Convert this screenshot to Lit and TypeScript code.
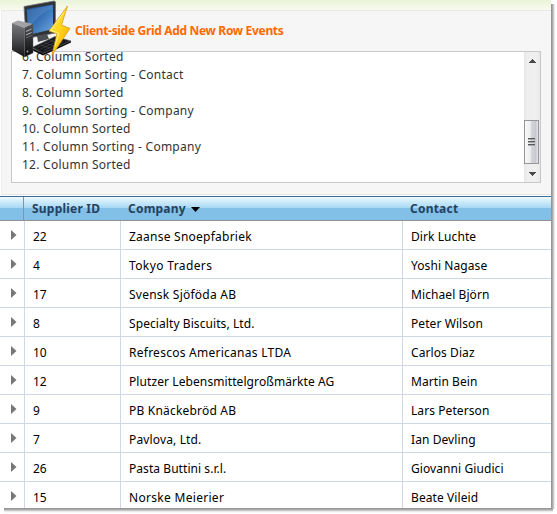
import { LitElement, html, css } from "lit";
import { customElement } from "lit/decorators.js";

const log = [
  "6. Column Sorted",
  "7. Column Sorting - Contact",
  "8. Column Sorted",
  "9. Column Sorting - Company",
  "10. Column Sorted",
  "11. Column Sorting - Company",
  "12. Column Sorted",
];

interface Supplier {
  id: number;
  company: string;
  contact: string;
  /** Letter spacing of the company name, in px. */
  tracking: number;
}

const suppliers: Supplier[] = [
  { id: 22, company: "Zaanse Snoepfabriek", contact: "Dirk Luchte", tracking: 0.24 },
  { id: 4, company: "Tokyo Traders", contact: "Yoshi Nagase", tracking: 0.38 },
  { id: 17, company: "Svensk Sjöföda AB", contact: "Michael Björn", tracking: 0.24 },
  { id: 8, company: "Specialty Biscuits, Ltd.", contact: "Peter Wilson", tracking: 0.08 },
  { id: 10, company: "Refrescos Americanas LTDA", contact: "Carlos Diaz", tracking: 0.26 },
  { id: 12, company: "Plutzer Lebensmittelgroßmärkte AG", contact: "Martin Bein", tracking: 0.09 },
  { id: 9, company: "PB Knäckebröd AB", contact: "Lars Peterson", tracking: 0.2 },
  { id: 7, company: "Pavlova, Ltd.", contact: "Ian Devling", tracking: 0.14 },
  { id: 26, company: "Pasta Buttini s.r.l.", contact: "Giovanni Giudici", tracking: 0.06 },
  { id: 15, company: "Norske Meierier", contact: "Beate Vileid", tracking: 0.3 },
];

@customElement("event-log")
class EventLog extends LitElement {
  static styles = css`
    :host { display: block; position: relative; box-sizing: border-box; height: 185px; margin-left: 1px; padding: 0 10px 0 10px;
      background: #f6f6f6; border-top: 1px solid #e8e8e8; border-left: 1px solid #ededed; border-bottom: 1px solid #e6e6e6; }
    .title { height: 40px; padding-left: 63px; line-height: 40px; font-weight: 700; font-size: 12px; color: #ff6a00; letter-spacing: -0.32px; white-space: nowrap; }
    .icon { position: absolute; left: 10px; top: -11px; width: 60px; height: 58px; z-index: 2; }
    .box { box-sizing: border-box; margin-left: -1px; width: 530px; height: 132px; border: 1px solid #c8c8c8; background: #fff; display: flex; overflow: hidden; }
    .lines { flex: 1; margin-top: -4px; padding-left: 10px; font-size: 12px; line-height: 18px; letter-spacing: 0.25px; color: #333; }
    .line { height: 18px; white-space: pre; }
    .bar { width: 16px; height: 130px; background: linear-gradient(90deg, #e5e5e5, #eee 3px, #f0f0f0 12px, #e8e8e8); }
    .bar svg { display: block; }
  `;
  render() {
    return html`
      <svg class="icon" viewBox="0 0 60 58">
        <defs>
          <linearGradient id="scr" x1="0" y1="0" x2="1" y2="1">
            <stop offset="0" stop-color="#1c4f94" /><stop offset=".5" stop-color="#3873b8" /><stop offset="1" stop-color="#73a9df" />
          </linearGradient>
          <linearGradient id="twr" x1="0" y1="0" x2="0" y2="1">
            <stop offset="0" stop-color="#77797c" /><stop offset=".5" stop-color="#4a4b4e" /><stop offset="1" stop-color="#151517" />
          </linearGradient>
          <linearGradient id="front" x1="0" y1="0" x2="0" y2="1">
            <stop offset="0" stop-color="#55575a" /><stop offset=".5" stop-color="#2d2e30" /><stop offset="1" stop-color="#0c0c0d" />
          </linearGradient>
          <linearGradient id="bolt" x1="0" y1="0" x2="1" y2="1">
            <stop offset="0" stop-color="#fff05a" /><stop offset=".5" stop-color="#ffd41c" /><stop offset="1" stop-color="#f3a005" />
          </linearGradient>
        </defs>
        <path d="M12 6.500 42 1q1.500 0 1.500 1.500V33L14 38.500Z" fill="#303235" stroke="#737578" stroke-width=".8" />
        <path d="M14.500 9 41 4.500V29L16.500 35Z" fill="url(#scr)" />
        <path d="M15 10 40 5.500v3Q24 15 16 30Z" fill="#8bbbe8" opacity=".2" />
        <path d="M25 36 35 34l2 5-11 3Z" fill="#4c4f52" />
        <path d="M20 47.500 43 36.500 59 41 31 53.500Z" fill="#222326" stroke="#56585b" stroke-width=".6" />
        <path d="M20 48v2l11 5.500 28-13v-1.500L31 53.500Z" fill="#0c0c0d" />
        <path d="m24 47 19-9 12 3-24 11Z" fill="#131416" />
        <path d="m25.500 47.500 20-9m-17 10.500 20-9m-17 10.500 20-9M29 45l9 3m-5-5 9 3m-4-5.500 9 3" stroke="#4d5056" stroke-width=".6" />
        <path d="m0 23 6-2.500 15 3.500-8.500 4Z" fill="#a0a2a5" />
        <path d="m0 23 12.500 5v29L0 50Z" fill="url(#twr)" />
        <path d="m12.500 28 8.500-4v29l-8.500 4Z" fill="url(#front)" stroke="#5a5c5f" stroke-width=".4" />
        <path d="m14 31.500 5.500-2.500m-5.500 6 5.500-2.500" stroke="#b3b5b8" stroke-width="1" />
        <path d="m14 38 5.500-2.500" stroke="#77797c" stroke-width=".7" />
        <circle cx="15.500" cy="51.500" r=".9" fill="#a3a5a8" />
        <path d="M55.500 6 37 31l8 2.500L40 55 58 28.500 49.500 25Z" fill="url(#bolt)" stroke="#dc9d14" stroke-width=".8" />
        <path d="M52.500 11.500 38.500 30.500l8 2.500-3.500 13" fill="none" stroke="#fff9a8" stroke-width=".8" />
      </svg>
      <div class="title"><span>Client-side Grid Add New Row Events</span></div>
      <div class="box">
        <div class="lines">${log.map((l) => html`<div class="line"><span>${l}</span></div>`)}</div>
        <div class="bar">
          <svg width="16" height="130" viewBox="0 0 16 130" shape-rendering="crispEdges">
            <defs>
              <linearGradient id="th"><stop offset="0" stop-color="#fafafa" /><stop offset=".42" stop-color="#ececee" /><stop offset=".5" stop-color="#d5d6dc" /><stop offset=".8" stop-color="#c8c9d0" /><stop offset="1" stop-color="#eee" /></linearGradient>
            </defs>
            <path d="M5 11h7v-1h-1v-1h-1v-1h-1v-1h-1v1h-1v1h-1v1h-1Z" fill="#4a4a4a" />
            <rect x=".5" y="68.500" width="14" height="43" rx="1" fill="url(#th)" stroke="#96969a" />
            <path d="M4 86.500h7M4 89.500h7M4 92.500h7" stroke="#55585d" />
            <path d="M4 87.500h7M4 90.500h7M4 93.500h7" stroke="#aaa" />
            <path d="M5 120h7v1h-1v1h-1v1h-1v1h-1v-1h-1v-1h-1v-1h-1Z" fill="#4a4a4a" />
          </svg>
        </div>
      </div>`;
  }
}

@customElement("supplier-grid")
class SupplierGrid extends LitElement {
  static styles = css`
    :host { display: block; border-top: 1px solid #3d6c98; margin-top: 1px; }
    .row, .head { display: grid; grid-template-columns: 25px 96px 282px 1fr; }
    .head { height: 23px; line-height: 24px; border-bottom: 1px solid #8f9196; font-weight: 700; font-size: 12px; color: #26425f;
      background: linear-gradient(#f2fbff 0, #d8f0fb 3px, #a6d8f3 11px, #82c0e8 11.500px, #82c0e8); }
    .head .cell { padding-left: 7px; letter-spacing: 0.22px; white-space: nowrap; }
    .head .edge { width: 23px; border-right: 1px solid #8f9196; }
    .row { height: 29px; line-height: 31px; font-size: 12px; color: #000; }
    .row > div { box-sizing: border-box; height: 29px; border-right: 1px solid #d0d7e5; border-bottom: 1px solid #d0d7e5; padding-left: 8px; white-space: nowrap; }
    .row > div:last-child { border-right: 0; letter-spacing: 0.08px; }
    .row > .exp { padding: 9px 0 0 11px; line-height: 0; }
    .sort { margin-left: 5px; vertical-align: 1px; }
  `;
  render() {
    return html`
      <div class="head">
        <div class="edge"></div>
        <div class="cell"><span>Supplier ID</span></div>
        <div class="cell"><span>Company</span><svg class="sort" width="9" height="5"><path d="M0 0h9L4.500 5Z" fill="#000" /></svg></div>
        <div class="cell"><span>Contact</span></div>
      </div>
      ${suppliers.map((s) => html`
        <div class="row">
          <div class="exp"><svg width="6" height="10"><path d="M0 0 5.500 5 0 10Z" fill="#777" /></svg></div>
          <div><span>${s.id}</span></div>
          <div><span style="letter-spacing:${s.tracking}px">${s.company}</span></div>
          <div><span>${s.contact}</span></div>
        </div>`)}`;
  }
}

@customElement("app-root")
class AppRoot extends LitElement {
  static styles = css`
    :host { display: block; height: 514px; background: #fff; overflow: hidden; font-family: "Noto Sans", "Open Sans", sans-serif; }
    .window { width: 551px; height: 508px; overflow: hidden; background: linear-gradient(#e9f4d9, #f8faee 10px, #fff 10px); }
    .frame { width: 551px; height: 508px; position: relative; }
    .right { position: absolute; left: 551px; top: 4px; width: 6px; height: 505px; background: linear-gradient(90deg, #8c8c8c, #b4b4b4 2px, #ececec 3.500px, #fff 5px); }
    .bottom { position: absolute; left: 4px; top: 508px; width: 549px; height: 6px; background: linear-gradient(#8c8c8c, #b4b4b4 2px, #ececec 3.500px, #fff 5px); }
    .top { height: 10px; }
  `;
  render() {
    return html`<div class="frame">
      <div class="window"><div class="top"></div><event-log></event-log><supplier-grid></supplier-grid></div>
      <div class="bottom"></div><div class="right"></div>
    </div>`;
  }
}
